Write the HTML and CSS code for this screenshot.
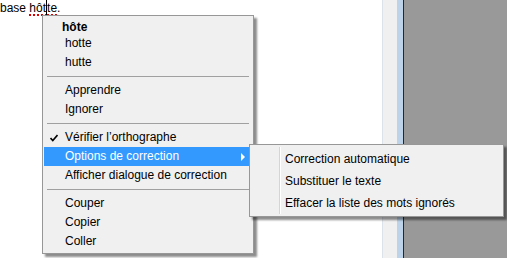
FILE: index.html
```html
<!DOCTYPE html>
<html lang="fr">
<head>
    <meta charset="UTF-8">
    <meta name="viewport" content="width=device-width, initial-scale=1.0">
    <title>Orthographe</title>
    <link rel="stylesheet" href="styles.css">
</head>
<body>
    <div class="screen">
        <div class="doc">
            <p class="line">base <span class="typo">hôt<span class="caret"></span>te</span>.</p>
        </div>
        <div class="frame"></div>
        <div class="bar"></div>
        <div class="edge"></div>
        <div class="desk"></div>
    </div>

    <div class="menu main">
        <div class="head">hôte</div>
        <div class="item">hotte</div>
        <div class="item">hutte</div>
        <div class="sep"></div>
        <div class="item">Apprendre</div>
        <div class="item">Ignorer</div>
        <div class="sep"></div>
        <div class="item">
            <svg class="check" width="8" height="8" viewBox="0 0 8 8"><path d="M0.5 4 L2.8 6.5 L7.5 1" fill="none" stroke="#000" stroke-width="1.6"/></svg>
            Vérifier l’orthographe
        </div>
        <div class="item active">Options de correction<span class="arrow"></span></div>
        <div class="item">Afficher dialogue de correction</div>
        <div class="sep"></div>
        <div class="item">Couper</div>
        <div class="item">Copier</div>
        <div class="item">Coller</div>
    </div>

    <div class="menu sub">
        <div class="gutter"></div>
        <div class="subitem">Correction automatique</div>
        <div class="subitem">Substituer le texte</div>
        <div class="subitem">Effacer la liste des mots ignorés</div>
    </div>
</body>
</html>
```

FILE: styles.css
```css
body {
    margin: 0;
    font-family: "Liberation Sans", Arial, sans-serif;
    font-size: 12px;
    color: #000;
    overflow: hidden;
}
.screen {
    display: flex;
    height: 258px;
}
.doc {
    width: 382px;
    background: #fff;
}
.line {
    margin: 0;
    line-height: 15px;
}
.typo {
    text-decoration: underline dotted #e00000;
    text-decoration-thickness: 2px;
    text-underline-offset: 2px;
}
.caret {
    display: inline-block;
    width: 1px;
    height: 15px;
    background: #000;
    vertical-align: -3px;
}
.frame {
    width: 14px;
    background: #f0f0f0;
    border-left: 1px solid #dce2e9;
}
.bar {
    width: 6px;
    background: #bcd3ea;
}
.edge {
    width: 1px;
    background: #1c2a36;
}
.desk {
    flex: 1;
    background: #999;
}

.menu {
    position: absolute;
    box-sizing: border-box;
    background: #f0f0f0;
    border: 1px solid #979797;
    box-shadow: 3px 3px 2px rgba(0, 0, 0, 0.45);
}
.main {
    left: 42px;
    top: 15px;
    width: 212px;
    padding: 2px 3px 2px 1px;
}
.head {
    height: 16px;
    line-height: 19px;
    padding-left: 18px;
    font-weight: bold;
}
.item {
    position: relative;
    height: 19px;
    line-height: 19px;
    padding-left: 21px;
    white-space: nowrap;
}
.item.active {
    background: #3399ff;
    color: #fff;
}
.check {
    position: absolute;
    left: 6px;
    top: 6px;
}
.arrow {
    position: absolute;
    right: 5px;
    top: 6px;
    border-left: 4px solid #fff;
    border-top: 4px solid transparent;
    border-bottom: 4px solid transparent;
}
.sep {
    height: 1px;
    margin: 4px 1px 4px 3px;
    background: #a0a0a0;
}

.sub {
    left: 249px;
    top: 144px;
    width: 255px;
    height: 73px;
    padding: 3px 2px;
}
.gutter {
    position: absolute;
    left: 29px;
    top: 2px;
    bottom: 2px;
    width: 1px;
    background: #d5d5d5;
    border-right: 1px solid #fff;
}
.subitem {
    height: 22px;
    line-height: 22px;
    padding-left: 33px;
    white-space: nowrap;
}
```
